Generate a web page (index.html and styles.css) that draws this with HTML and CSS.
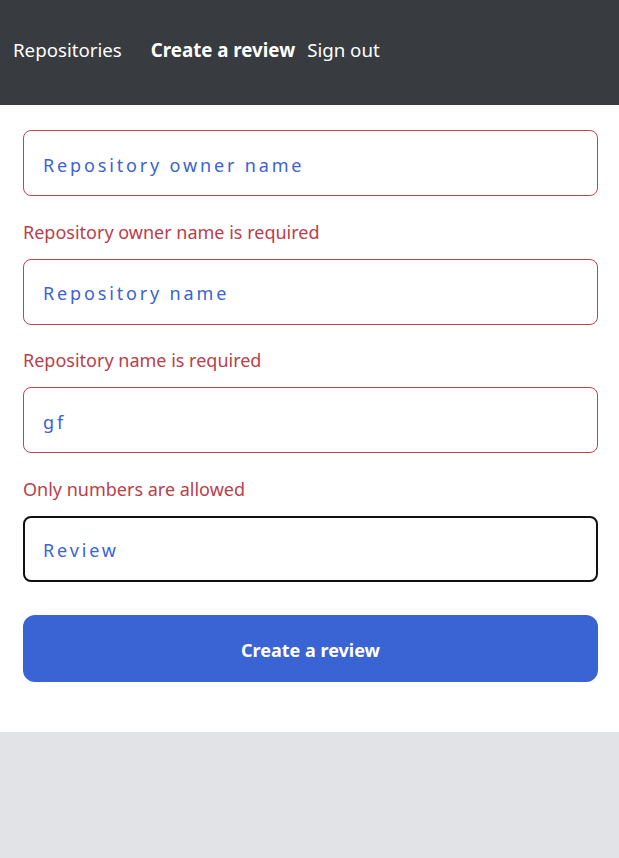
FILE: index.html
```html
<!DOCTYPE html>
<html lang="en">
<head>
<meta charset="utf-8">
<title>Create a review</title>
<link rel="stylesheet" href="styles.css">
</head>
<body>
<div class="app">
  <nav class="appbar">
    <a class="tab tab-repos" href="#">Repositories</a>
    <a class="tab tab-active" href="#">Create a review</a>
    <a class="tab" href="#">Sign out</a>
  </nav>
  <form class="form">
    <input class="field field-error" type="text" placeholder="Repository owner name">
    <div class="error">Repository owner name is required</div>
    <input class="field field-error" type="text" placeholder="Repository name">
    <div class="error">Repository name is required</div>
    <input class="field field-error" type="text" value="gf">
    <div class="error">Only numbers are allowed</div>
    <input class="field field-focus" type="text" placeholder="Review" autofocus>
    <button class="submit" type="button">Create a review</button>
  </form>
  <div class="rest"></div>
</div>
</body>
</html>
```
FILE: styles.css
```css
html, body {
  margin: 0;
  padding: 0;
  height: 100%;
}
body {
  font-family: "Noto Sans", "Open Sans", sans-serif;
  background: #e1e3e7;
}
.app {
  display: flex;
  flex-direction: column;
  min-height: 858px;
}
.appbar {
  background: #383b40;
  height: 105px;
  display: flex;
  align-items: center;
  padding-left: 13px;
  box-sizing: border-box;
}
.tab {
  color: #ffffff;
  text-decoration: none;
  font-size: 18.7px;
  margin-right: 14px;
  padding-bottom: 6px;
}
.tab-repos {
  margin-right: 29px;
}
.tab-active {
  font-weight: 700;
  margin-right: 12px;
}
.form {
  background: #ffffff;
  padding: 25px 21px 50px 23px;
  display: flex;
  flex-direction: column;
}
.field {
  height: 66px;
  box-sizing: border-box;
  border-radius: 8px;
  padding: 3px 19px 0;
  font-family: inherit;
  font-size: 18px;
  letter-spacing: 2.85px;
  color: #3a63d4;
  background: #ffffff;
  outline: none;
  caret-color: #3a63d4;
}
.field::placeholder {
  color: #3a63d4;
  opacity: 1;
}
.field-error {
  border: 1px solid #c9404b;
}
.field-focus {
  border: 2px solid #111111;
  padding-left: 18px;
}
.error {
  color: #b9404a;
  font-size: 18px;
  line-height: 24px;
  margin: 23.5px 0 15px;
}
.submit {
  margin-top: 33px;
  height: 67px;
  padding-top: 4px;
  border: none;
  border-radius: 12px;
  background: #3a63d4;
  color: #ffffff;
  font-family: inherit;
  font-size: 18px;
  font-weight: 700;
  cursor: pointer;
}
.rest {
  flex: 1;
  background: #e1e3e7;
  border-radius: 0 0 6px 6px;
}
```
